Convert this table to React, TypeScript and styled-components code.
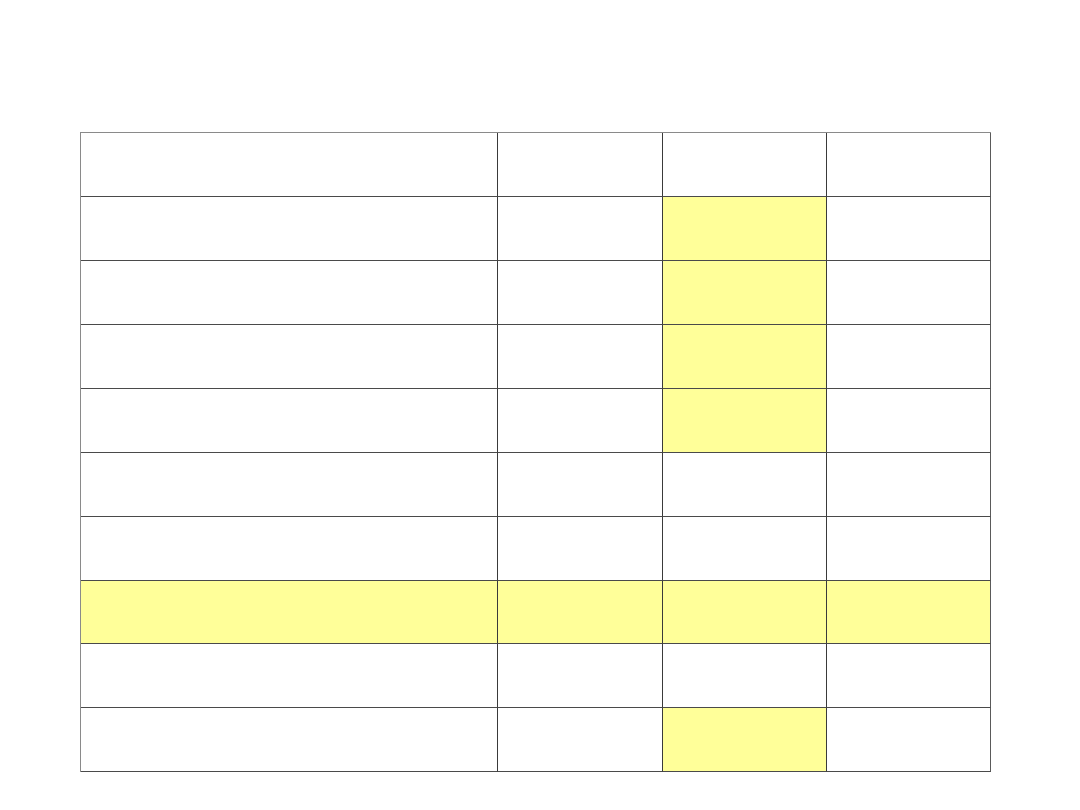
import { FC } from "react";
import styled, { createGlobalStyle } from "styled-components";

const GlobalStyle = createGlobalStyle`
  html, body {
    margin: 0;
    padding: 0;
    background: #ffffff;
    font-family: "Liberation Sans", Arial, sans-serif;
  }
`;

const Page = styled.div`
  width: 1080px;
  height: 810px;
  padding: 132px 0 0 80px;
  box-sizing: border-box;
`;

// grid of empty cells, borders drawn right/bottom on each cell
const Sheet = styled.div`
  display: grid;
  grid-template-columns: 417px 165px 164px 164px;
  width: fit-content;
  border-top: 1px solid #8a8a8a;
  border-left: 1px solid #8a8a8a;
`;

const Cell = styled.div<{ $hl?: boolean; $h: number; $last?: boolean }>`
  height: ${({ $h }) => $h}px;
  box-sizing: border-box;
  border-right: 1px solid ${({ $last }) => ($last ? "#5a5a5a" : "#3a3a3a")};
  border-bottom: 1px solid #4a4a4a;
  background: ${({ $hl }) => ($hl ? "#ffff99" : "#ffffff")};
`;

const rowHeights = [64, 64, 64, 64, 64, 64, 64, 63, 64, 64];

const isHighlighted = (row: number, col: number) => {
  if (row === 7) return true;
  if (col === 2 && ((row >= 1 && row <= 4) || row === 9)) return true;
  return false;
};

const App: FC = () => {
  return (
    <>
      <GlobalStyle />
      <Page>
        <Sheet>
          {rowHeights.map((h, r) =>
            [0, 1, 2, 3].map((c) => (
              <Cell
                key={`${r}-${c}`}
                $h={h}
                $hl={isHighlighted(r, c)}
                $last={c === 3}
              />
            ))
          )}
        </Sheet>
      </Page>
    </>
  );
};

export default App;
